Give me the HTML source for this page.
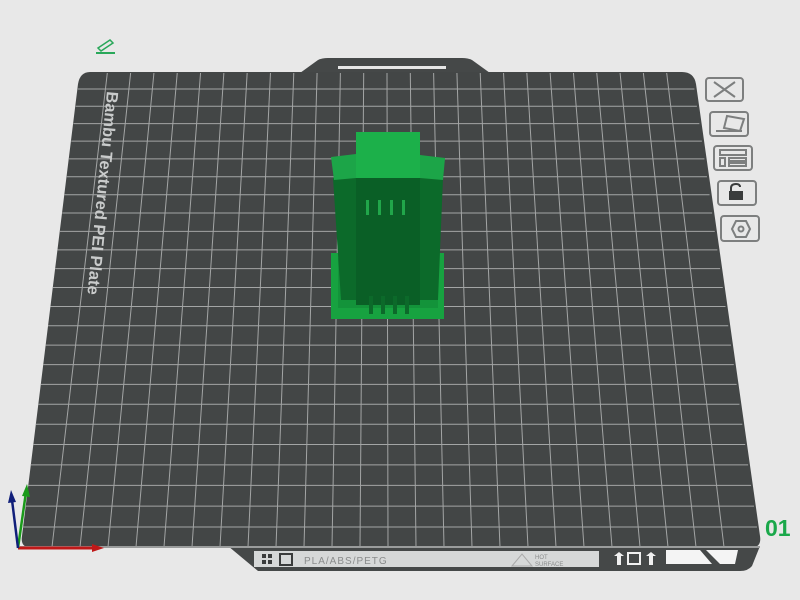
<!DOCTYPE html>
<html><head><meta charset="utf-8"><style>
html,body{margin:0;padding:0;background:#e8e8e8;width:800px;height:600px;overflow:hidden}
svg{display:block}
</style></head><body>
<svg id="s" width="800" height="600" viewBox="0 0 800 600" xmlns="http://www.w3.org/2000/svg" font-family="Liberation Sans, sans-serif">
<rect width="800" height="600" fill="#e8e8e8"/>
<path d="M300 73 L318 60 Q322 58 328 58 L462 58 Q468 58 472 60 L490 73 Z" fill="#454848"/>
<rect x="338" y="66" width="108" height="3" fill="#e6e6e6"/>
<path d="M228 546 L760 546 L752 566 Q748 571 740 571 L258 571 Z" fill="#454848"/>
<rect x="254" y="551" width="345" height="16" fill="#d6d8d8"/>
<path d="M666 550 L700 550 L712 564 L666 564 Z" fill="#f4f4f4"/>
<path d="M706 550 L738 550 L735 564 L720 564 Z" fill="#f4f4f4"/>
<path d="M90 72 L682 72 Q694 72 696 84 L760 536 Q762 548 750 548 L32 548 Q20 548 22 536 L78 84 Q80 72 90 72 Z" fill="#434646"/>
<g id="grid" stroke="#a3a5a5" stroke-width="1" fill="none"></g>
<rect x="20" y="546" width="740" height="2" fill="#9a9c9c"/>
<text transform="translate(107,91) rotate(95.5)" fill="#c9cbcb" font-size="16.5" font-weight="bold">Bambu Textured PEI Plate</text>
<g fill="#3a3c3c"><rect x="262" y="554" width="4" height="4"/><rect x="268" y="554" width="4" height="4"/><rect x="262" y="560" width="4" height="4"/><rect x="268" y="560" width="4" height="4"/></g>
<rect x="280" y="554" width="12" height="11" fill="none" stroke="#3a3c3c" stroke-width="2"/>
<text x="304" y="564" font-size="10" fill="#8a8c8c" letter-spacing="1">PLA/ABS/PETG</text>
<path d="M512 566 L522 554 L532 566 Z" fill="none" stroke="#aaa"/>
<text x="535" y="559" font-size="6" fill="#8a8c8c">HOT</text>
<text x="535" y="566" font-size="6" fill="#8a8c8c">SURFACE</text>
<g fill="#f0f0f0"><path d="M614 556 L619 552 L624 556 L621 556 L621 565 L617 565 L617 556Z"/><rect x="628" y="553" width="12" height="11" fill="none" stroke="#f0f0f0" stroke-width="2"/><path d="M646 556 L651 552 L656 556 L653 556 L653 565 L649 565 L649 556Z"/></g>
<!-- model -->
<rect x="331" y="253" width="113" height="66" fill="#17a240"/>
<rect x="338" y="258" width="100" height="50" fill="#13933a"/>
<path d="M333 178 L356 176 L356 300 L341 300 Z" fill="#0c6a2a"/>
<path d="M420 176 L443 178 L438 300 L420 300 Z" fill="#0c6a2a"/>
<rect x="356" y="175" width="64" height="130" fill="#0a5f26"/>
<g fill="#0c6a2a"><rect x="369" y="296" width="4" height="18"/><rect x="381" y="296" width="4" height="18"/><rect x="393" y="296" width="4" height="18"/><rect x="405" y="296" width="4" height="18"/></g>
<g fill="#21a64a"><rect x="366" y="200" width="3" height="15"/><rect x="378" y="200" width="3" height="15"/><rect x="390" y="200" width="3" height="15"/><rect x="402" y="200" width="3" height="15"/></g>
<path d="M331 157 L356 154 L356 178 L334 180 Z" fill="#1ca548"/>
<path d="M420 155 L445 158 L443 180 L420 178 Z" fill="#1ca548"/>
<rect x="356" y="132" width="64" height="46" fill="#1cb04a"/>
<!-- right icons -->
<g fill="none" stroke="#7d7f7f" stroke-width="2">
<rect x="706" y="78" width="37" height="23" rx="3"/>
<path d="M714 82 L735 97 M735 82 L714 97"/>
<rect x="710" y="112" width="38" height="24" rx="3"/>
<path d="M727 116 L744 119 L740 131 L724 128 Z"/><path d="M716 131 L742 131"/>
<rect x="714" y="146" width="38" height="24" rx="3"/>
<rect x="720" y="150" width="26" height="5"/><rect x="720" y="158" width="5" height="8"/><rect x="729" y="158" width="17" height="3"/><rect x="729" y="163" width="17" height="3"/>
<rect x="718" y="181" width="38" height="24" rx="3"/>
<rect x="721" y="216" width="38" height="25" rx="3"/>
<path d="M732 229 L736 221 L746 221 L750 229 L746 237 L736 237 Z"/>
<circle cx="741" cy="229" r="2.5"/>
</g>
<path d="M731 191 L731 188 Q731 184 736 184 Q740 184 740 187" fill="none" stroke="#3a3c3c" stroke-width="2"/>
<rect x="729" y="191" width="14" height="9" fill="#3a3c3c"/>
<text x="765" y="536" font-size="23" font-weight="bold" fill="#1aa84a">01</text>
<path d="M98 48 L110 40 L113 43 L101 51 Z" fill="none" stroke="#2aa85a" stroke-width="1.5"/>
<path d="M96 53 L115 53" stroke="#2aa85a" stroke-width="2"/>
<line x1="18" y1="548" x2="95" y2="548" stroke="#c01818" stroke-width="3"/>
<path d="M92 544 L104 548 L92 552 Z" fill="#c01818"/>
<line x1="18" y1="548" x2="26" y2="492" stroke="#1a9a1a" stroke-width="2.5"/>
<path d="M22 496 L27 484 L30 497 Z" fill="#1a9a1a"/>
<line x1="18" y1="548" x2="12" y2="500" stroke="#111f7a" stroke-width="2.5"/>
<path d="M8 503 L11 490 L16 502 Z" fill="#111f7a"/>
</svg>
<script>
(function(){
var g=document.getElementById('grid'),h='';
var yT=72,yB=548,rows=25,ys=[yT],y=yT;
for(var i=0;i<rows;i++){y+=17+4*i/(rows-1);ys.push(y);}
var sc=(yB-yT)/(y-yT);ys=ys.map(function(v){return yT+(v-yT)*sc;});
function xl(yy){var t=(yy-yT)/(yB-yT);return 80+(20-80)*t;}
function xr(yy){var t=(yy-yT)/(yB-yT);return 692+(760-692)*t;}
for(var i=1;i<ys.length-1;i++){h+='<line x1="'+xl(ys[i])+'" y1="'+ys[i]+'" x2="'+xr(ys[i])+'" y2="'+ys[i]+'"/>';}
var cols=26;
for(var j=1;j<cols;j++){var t=j/cols;var x1=84+t*(690-84),x2=24+t*(752-24);h+='<line x1="'+x1+'" y1="'+(yT+1)+'" x2="'+x2+'" y2="'+(yB-1)+'"/>';}
g.innerHTML=h;
})();
</script>
</body></html>
